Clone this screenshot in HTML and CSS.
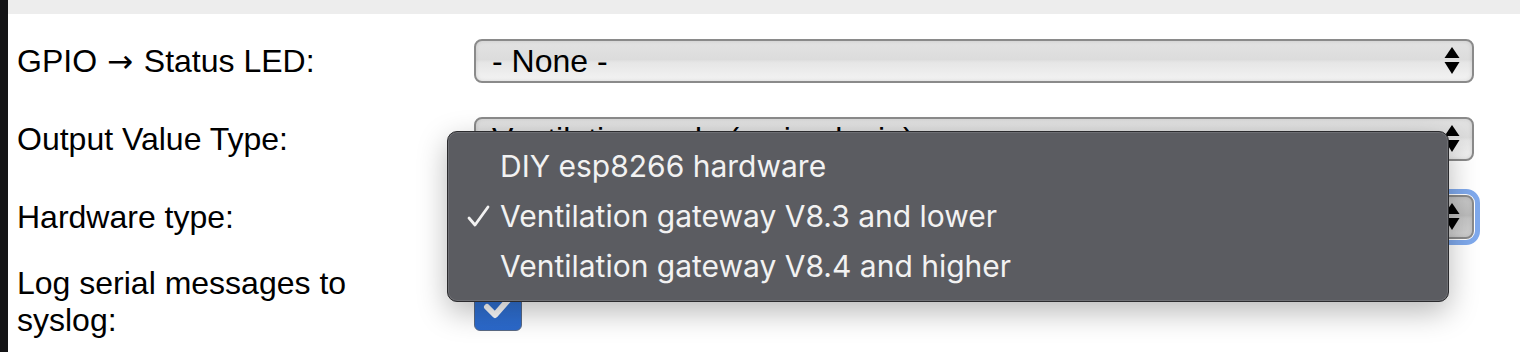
FILE: index.html
```html
<!DOCTYPE html>
<html lang="en">
<head>
    <meta charset="UTF-8">
    <meta name="viewport" content="width=device-width, initial-scale=1.0">
    <title>Hardware settings</title>
    <link rel="stylesheet" href="styles.css">
</head>
<body>
<div class="window">
    <div class="topbar"></div>

    <!-- Form rows -->
    <div class="form">
        <div class="label">GPIO <span class="arrow">&rarr;</span> Status LED:</div>
        <div class="select">
            <span class="select-text">- None -</span>
            <svg class="arrows" width="16" height="28" viewBox="0 0 16 28"><path d="M8 0 L15.5 11 L0.5 11 Z"/><path d="M0.5 15 L15.5 15 L8 27 Z"/></svg>
        </div>

        <div class="label">Output Value Type:</div>
        <div class="select">
            <span class="select-text">Ventilationmode (main plugin)</span>
            <svg class="arrows" width="16" height="28" viewBox="0 0 16 28"><path d="M8 0 L15.5 11 L0.5 11 Z"/><path d="M0.5 15 L15.5 15 L8 27 Z"/></svg>
        </div>

        <div class="label">Hardware type:</div>
        <!-- tekst valt onder het open menu -->
        <div class="select pressed">
            <span class="select-text"></span>
            <svg class="arrows" width="16" height="28" viewBox="0 0 16 28"><path d="M8 0 L15.5 11 L0.5 11 Z"/><path d="M0.5 15 L15.5 15 L8 27 Z"/></svg>
        </div>

        <div class="label label-wrap">Log serial messages to syslog:</div>
        <div class="checkbox">
            <svg width="48" height="48" viewBox="0 0 48 48"><polyline points="13,24 21,32 36,15" fill="none" stroke="#fff" stroke-width="6" stroke-linecap="round" stroke-linejoin="round"/></svg>
        </div>
    </div>

    <!-- Open dropdown of "Hardware type" -->
    <div class="popup-menu">
        <div class="menu-item"><span class="mark"></span>DIY esp8266 hardware</div>
        <div class="menu-item">
            <span class="mark"><svg width="23" height="23" viewBox="0 0 23 23"><polyline points="2,13 8,20 21,2" fill="none" stroke="#f2f2f2" stroke-width="2.8" stroke-linecap="round" stroke-linejoin="round"/></svg></span>Ventilation gateway V8.3 and lower
        </div>
        <div class="menu-item"><span class="mark"></span>Ventilation gateway V8.4 and higher</div>
    </div>
</div>
</body>
</html>
```

FILE: styles.css
```css
body {
    margin: 0;
    padding: 0;
    background-color: #fff;
    font-family: "Liberation Sans", Arial, sans-serif;
}

.window {
    position: relative;
    height: 352px;
    overflow: hidden;
    border-left: 8px solid #141416;
    background-color: #fff;
}

.topbar {
    height: 14px;
    background-color: #ededed;
}

/* Formulier */
.form {
    display: grid;
    grid-template-columns: 457px 1000px;
    row-gap: 34px;
    align-items: center;
    padding: 25px 0 0 9px;
}

.label {
    font-size: 32px;
    color: #000;
}

.label .arrow {
    margin: 0 2px 0 1px;
    font-family: "DejaVu Sans", sans-serif;
    font-size: 31px;
}

.label-wrap {
    width: 360px;
    margin-top: -8px;
    align-self: start;
}

.select {
    display: flex;
    align-items: center;
    justify-content: space-between;
    box-sizing: border-box;
    height: 44px;
    padding: 0 12px 0 16px;
    border: 2px solid #8a8a8a;
    border-radius: 8px;
    background: linear-gradient(to bottom, #e3e3e3 0%, #dcdcdc 46%, #e6e6e6 54%, #f3f3f3 100%);
    box-shadow: inset 0 0 4px rgba(0, 0, 0, 0.12);
    font-size: 32px;
    color: #000;
}

.select .select-text {
    white-space: nowrap;
}

.select.pressed {
    background: linear-gradient(to bottom, #c9c9c9 0%, #bcbcbc 46%, #c6c6c6 54%, #d2d2d2 100%);
    outline: 5px solid #7fa9ec;
    outline-offset: 1px;
}

.arrows {
    fill: #000;
}

.checkbox {
    align-self: start;
    margin-top: 10px;
    width: 48px;
    height: 48px;
    box-sizing: border-box;
    border: 1px solid #5a6a85;
    border-radius: 6px;
    background: linear-gradient(to bottom, #3579dc, #2b69cc);
}

.checkbox svg {
    display: block;
    margin: -1px;
}

/* Open dropdown menu */
.popup-menu {
    position: absolute;
    left: 439px;
    top: 131px;
    width: 1002px;
    height: 171px;
    box-sizing: border-box;
    padding: 9px 0 0 0;
    background-color: #5b5c61;
    border: 1px solid #2b2b2e;
    border-radius: 10px;
    box-shadow: inset 0 0 0 1px rgba(255, 255, 255, 0.12), 0 10px 30px rgba(0, 0, 0, 0.28);
    font-family: Inter, "Liberation Sans", sans-serif;
    font-size: 30px;
    color: #f2f2f2;
}

.menu-item {
    display: flex;
    align-items: center;
    height: 50px;
    white-space: nowrap;
}

.menu-item .mark {
    display: flex;
    justify-content: flex-end;
    width: 42px;
    padding-right: 10px;
}
```
